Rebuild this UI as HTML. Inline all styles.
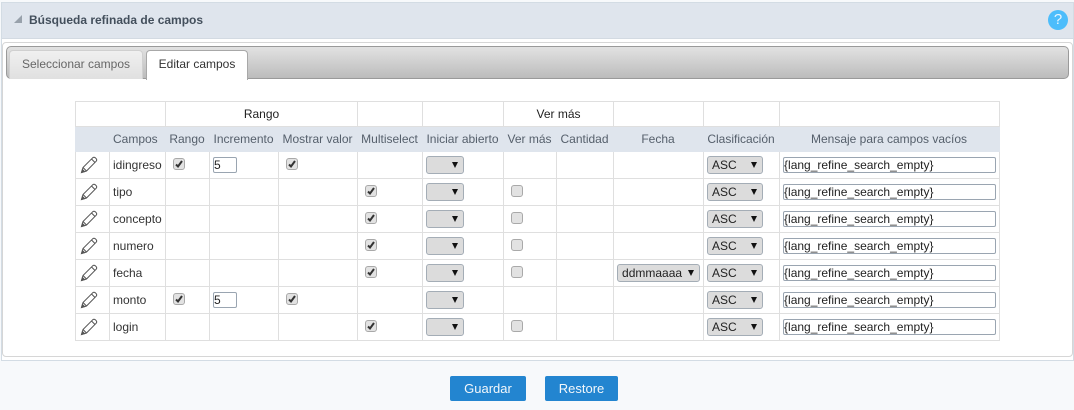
<!DOCTYPE html>
<html><head><meta charset="utf-8">
<style>
html,body{margin:0;padding:0;width:1074px;height:410px;overflow:hidden;background:#f7f9fb;font-family:"Liberation Sans",Arial,sans-serif;font-size:12px;color:#333}
.a{position:absolute;box-sizing:border-box}
table{position:absolute;left:75px;top:101px;border-collapse:collapse;table-layout:fixed;width:925px;background:#fff}
td{border:1px solid #dfdfdf;padding:0;height:26px;box-sizing:border-box;font-size:12px;color:#333;position:relative;white-space:nowrap;overflow:visible}
tr.g td{text-align:center;height:25px;color:#222}
tr.h td{background:#dfe5ed;border-color:#dfe5ed;color:#555f6b;height:25px;text-align:center;padding-right:1px}
tr.h td.l{text-align:left;padding:0 0 0 3px}
tr.r td{height:27px}
td.n{padding-left:3px}
.cb{position:absolute;width:12px;height:12px;box-sizing:border-box;border:1px solid #a9a9a9;border-radius:3px;background:#e2e2e2;top:6px;left:7px}
.cb svg{position:absolute;left:0;top:0}
.sel{position:absolute;left:3px;top:4px;height:18px;box-sizing:border-box;border:1px solid #a4adb6;border-radius:3px;background:#dcdcdc;color:#222;font-size:12px;line-height:16px;padding-left:4px}
.sel i{position:absolute;top:5px;width:0;height:0;border-left:3px solid transparent;border-right:3px solid transparent;border-top:6px solid #111}
.in{position:absolute;box-sizing:border-box;top:5px;height:16px;border:1px solid #9aa5b1;border-radius:2px;background:#fff;font-size:12px;line-height:14px;padding-left:0;color:#222}
.p{position:absolute;left:4px;top:4px}
.btn{position:absolute;top:376px;height:25px;background:#2385d0;border-radius:2px;color:#f2f7fb;font-size:13px;line-height:25px;text-align:center}
</style></head><body>
<div class="a" style="left:1px;top:2px;width:1073px;height:359px;background:#fff;border:1px solid #d3dce4"></div>
<div class="a" style="left:2px;top:3px;width:1071px;height:36px;background:#dfe5ed;border-bottom:1px solid #d3dae2"></div>
<svg class="a" style="left:13px;top:14px" width="10" height="10"><path d="M9 1V9H1Z" fill="#98a1ab"/></svg>
<div class="a" style="left:29px;top:12px;font-size:12px;font-weight:bold;color:#434f5c;line-height:16px">Búsqueda refinada de campos</div>
<div class="a" style="left:1048px;top:10px;width:20px;height:20px;border-radius:50%;background:#4dbdfb;color:#e8f6ff;font-size:15px;line-height:20px;text-align:center">?</div>
<div class="a" style="left:2px;top:42px;width:1071px;height:315px;border:1px solid #d6d6d6;border-radius:4px;background:#fff"></div>
<div class="a" style="left:6px;top:46px;width:1063px;height:33px;border:1px solid #9a9a9a;border-radius:5px;background:linear-gradient(#e2e2e2,#bcbcbc)"></div>
<div class="a" style="left:9px;top:50px;width:134px;height:29px;border:1px solid #d0d0d0;border-bottom:0;border-radius:4px 4px 0 0;background:linear-gradient(#f0f0f0,#e0e0e0);color:#666;text-align:center;line-height:27px">Seleccionar campos</div>
<div class="a" style="left:146px;top:50px;width:102px;height:30px;border:1px solid #a8a8a8;border-bottom:0;border-radius:4px 4px 0 0;background:#fff;color:#333;text-align:center;line-height:27px">Editar campos</div>

<table>
<colgroup><col style="width:34px"><col style="width:56px"><col style="width:44px"><col style="width:69px"><col style="width:79px"><col style="width:65px"><col style="width:81px"><col style="width:53px"><col style="width:57px"><col style="width:90px"><col style="width:76px"><col style="width:220px"></colgroup>
<tr class="g"><td colspan="2"></td><td colspan="3">Rango</td><td></td><td></td><td colspan="2">Ver más</td><td></td><td></td><td></td></tr>
<tr class="h"><td></td><td class="l">Campos</td><td>Rango</td><td>Incremento</td><td>Mostrar valor</td><td>Multiselect</td><td>Iniciar abierto</td><td>Ver más</td><td>Cantidad</td><td>Fecha</td><td>Clasificación</td><td>Mensaje para campos vacíos</td></tr>
<tr class="r"><td><svg class="p" width="18" height="18" viewBox="0 0 18 18" fill="none" stroke="#555" stroke-width="1"><path d="M1.5 16.5L3 11.5L12.8 1.7Q14 .8 15.3 1.8L16.3 2.8Q17.2 4 16.2 5.2L6.5 15Z"/><path d="M3 11.5L6.5 15M11.5 3L15 6.5"/><path d="M1.5 16.5L2.4 13.4L4.6 15.6Z" fill="#555"/></svg></td><td class="n">idingreso</td><td><span class="cb"><svg width="10" height="10"><path d="M2 5.5L4 7.5L8 2" fill="none" stroke="#333" stroke-width="2"/></svg></span></td><td><span class="in" style="left:3px;width:24px">5</span></td><td><span class="cb"><svg width="10" height="10"><path d="M2 5.5L4 7.5L8 2" fill="none" stroke="#333" stroke-width="2"/></svg></span></td><td></td><td><span class="sel" style="width:38px"><i style="left:25px"></i></span></td><td></td><td></td><td></td><td><span class="sel" style="width:56px">ASC<i style="left:43px"></i></span></td><td><span class="in" style="left:3px;width:213px">{lang_refine_search_empty}</span></td></tr>
<tr class="r"><td><svg class="p" width="18" height="18" viewBox="0 0 18 18" fill="none" stroke="#555" stroke-width="1"><path d="M1.5 16.5L3 11.5L12.8 1.7Q14 .8 15.3 1.8L16.3 2.8Q17.2 4 16.2 5.2L6.5 15Z"/><path d="M3 11.5L6.5 15M11.5 3L15 6.5"/><path d="M1.5 16.5L2.4 13.4L4.6 15.6Z" fill="#555"/></svg></td><td class="n">tipo</td><td></td><td></td><td></td><td><span class="cb"><svg width="10" height="10"><path d="M2 5.5L4 7.5L8 2" fill="none" stroke="#333" stroke-width="2"/></svg></span></td><td><span class="sel" style="width:38px"><i style="left:25px"></i></span></td><td><span class="cb"></span></td><td></td><td></td><td><span class="sel" style="width:56px">ASC<i style="left:43px"></i></span></td><td><span class="in" style="left:3px;width:213px">{lang_refine_search_empty}</span></td></tr>
<tr class="r"><td><svg class="p" width="18" height="18" viewBox="0 0 18 18" fill="none" stroke="#555" stroke-width="1"><path d="M1.5 16.5L3 11.5L12.8 1.7Q14 .8 15.3 1.8L16.3 2.8Q17.2 4 16.2 5.2L6.5 15Z"/><path d="M3 11.5L6.5 15M11.5 3L15 6.5"/><path d="M1.5 16.5L2.4 13.4L4.6 15.6Z" fill="#555"/></svg></td><td class="n">concepto</td><td></td><td></td><td></td><td><span class="cb"><svg width="10" height="10"><path d="M2 5.5L4 7.5L8 2" fill="none" stroke="#333" stroke-width="2"/></svg></span></td><td><span class="sel" style="width:38px"><i style="left:25px"></i></span></td><td><span class="cb"></span></td><td></td><td></td><td><span class="sel" style="width:56px">ASC<i style="left:43px"></i></span></td><td><span class="in" style="left:3px;width:213px">{lang_refine_search_empty}</span></td></tr>
<tr class="r"><td><svg class="p" width="18" height="18" viewBox="0 0 18 18" fill="none" stroke="#555" stroke-width="1"><path d="M1.5 16.5L3 11.5L12.8 1.7Q14 .8 15.3 1.8L16.3 2.8Q17.2 4 16.2 5.2L6.5 15Z"/><path d="M3 11.5L6.5 15M11.5 3L15 6.5"/><path d="M1.5 16.5L2.4 13.4L4.6 15.6Z" fill="#555"/></svg></td><td class="n">numero</td><td></td><td></td><td></td><td><span class="cb"><svg width="10" height="10"><path d="M2 5.5L4 7.5L8 2" fill="none" stroke="#333" stroke-width="2"/></svg></span></td><td><span class="sel" style="width:38px"><i style="left:25px"></i></span></td><td><span class="cb"></span></td><td></td><td></td><td><span class="sel" style="width:56px">ASC<i style="left:43px"></i></span></td><td><span class="in" style="left:3px;width:213px">{lang_refine_search_empty}</span></td></tr>
<tr class="r"><td><svg class="p" width="18" height="18" viewBox="0 0 18 18" fill="none" stroke="#555" stroke-width="1"><path d="M1.5 16.5L3 11.5L12.8 1.7Q14 .8 15.3 1.8L16.3 2.8Q17.2 4 16.2 5.2L6.5 15Z"/><path d="M3 11.5L6.5 15M11.5 3L15 6.5"/><path d="M1.5 16.5L2.4 13.4L4.6 15.6Z" fill="#555"/></svg></td><td class="n">fecha</td><td></td><td></td><td></td><td><span class="cb"><svg width="10" height="10"><path d="M2 5.5L4 7.5L8 2" fill="none" stroke="#333" stroke-width="2"/></svg></span></td><td><span class="sel" style="width:38px"><i style="left:25px"></i></span></td><td><span class="cb"></span></td><td></td><td><span class="sel" style="width:83px">ddmmaaaa<i style="left:70px"></i></span></td><td><span class="sel" style="width:56px">ASC<i style="left:43px"></i></span></td><td><span class="in" style="left:3px;width:213px">{lang_refine_search_empty}</span></td></tr>
<tr class="r"><td><svg class="p" width="18" height="18" viewBox="0 0 18 18" fill="none" stroke="#555" stroke-width="1"><path d="M1.5 16.5L3 11.5L12.8 1.7Q14 .8 15.3 1.8L16.3 2.8Q17.2 4 16.2 5.2L6.5 15Z"/><path d="M3 11.5L6.5 15M11.5 3L15 6.5"/><path d="M1.5 16.5L2.4 13.4L4.6 15.6Z" fill="#555"/></svg></td><td class="n">monto</td><td><span class="cb"><svg width="10" height="10"><path d="M2 5.5L4 7.5L8 2" fill="none" stroke="#333" stroke-width="2"/></svg></span></td><td><span class="in" style="left:3px;width:24px">5</span></td><td><span class="cb"><svg width="10" height="10"><path d="M2 5.5L4 7.5L8 2" fill="none" stroke="#333" stroke-width="2"/></svg></span></td><td></td><td><span class="sel" style="width:38px"><i style="left:25px"></i></span></td><td></td><td></td><td></td><td><span class="sel" style="width:56px">ASC<i style="left:43px"></i></span></td><td><span class="in" style="left:3px;width:213px">{lang_refine_search_empty}</span></td></tr>
<tr class="r"><td><svg class="p" width="18" height="18" viewBox="0 0 18 18" fill="none" stroke="#555" stroke-width="1"><path d="M1.5 16.5L3 11.5L12.8 1.7Q14 .8 15.3 1.8L16.3 2.8Q17.2 4 16.2 5.2L6.5 15Z"/><path d="M3 11.5L6.5 15M11.5 3L15 6.5"/><path d="M1.5 16.5L2.4 13.4L4.6 15.6Z" fill="#555"/></svg></td><td class="n">login</td><td></td><td></td><td></td><td><span class="cb"><svg width="10" height="10"><path d="M2 5.5L4 7.5L8 2" fill="none" stroke="#333" stroke-width="2"/></svg></span></td><td><span class="sel" style="width:38px"><i style="left:25px"></i></span></td><td><span class="cb"></span></td><td></td><td></td><td><span class="sel" style="width:56px">ASC<i style="left:43px"></i></span></td><td><span class="in" style="left:3px;width:213px">{lang_refine_search_empty}</span></td></tr>
</table>

<div class="btn" style="left:450px;width:76px">Guardar</div>
<div class="btn" style="left:545px;width:73px">Restore</div>
</body></html>
